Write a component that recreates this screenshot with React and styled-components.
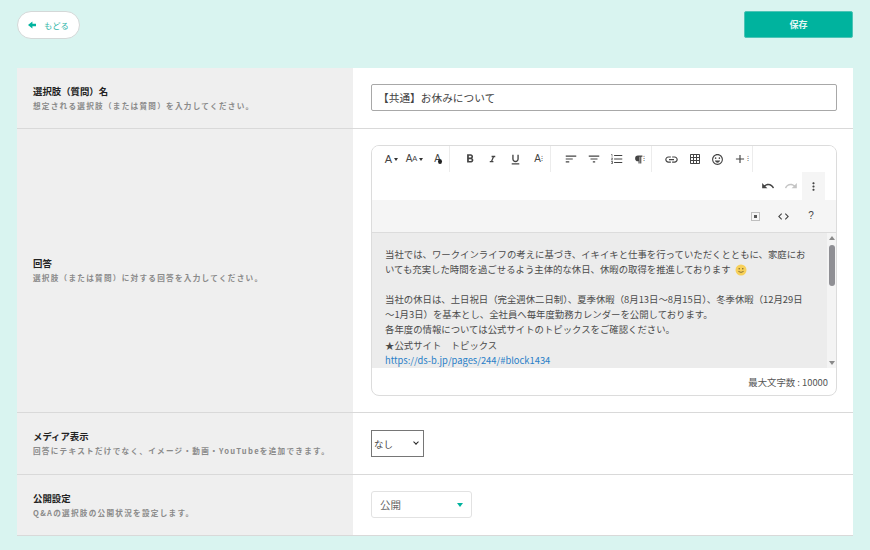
import styled, { createGlobalStyle } from "styled-components";
import {
  MdFormatBold,
  MdFormatItalic,
  MdFormatUnderlined,
  MdSort,
  MdFilterList,
  MdFormatListNumbered,
  MdLink,
  MdGridOn,
  MdOutlineEmojiEmotions,
  MdAdd,
  MdUndo,
  MdRedo,
  MdMoreVert,
  MdCode,
} from "react-icons/md";
import { FaParagraph } from "react-icons/fa";

const GlobalStyle = createGlobalStyle`
  html, body {
    margin: 0;
    padding: 0;
    background: #d9f4f0;
  }
  body {
    font-family: "Noto Sans CJK JP", "Noto Sans", sans-serif;
  }
`;

const Page = styled.div`
  height: 550px;
  box-sizing: border-box;
  padding: 11px 17px 14px;
  overflow: hidden;
`;

const TopBar = styled.div`
  display: flex;
  justify-content: space-between;
  margin-bottom: 29px;
`;

const BackButton = styled.button`
  width: 63px;
  height: 28px;
  box-sizing: border-box;
  display: flex;
  align-items: center;
  gap: 8px;
  padding: 0 0 0 10px;
  background: #fff;
  border: 1px solid #d4d8d8;
  border-radius: 14px;
  color: #2fb5a8;
  font: 400 8.3px "Noto Sans CJK JP", sans-serif;
`;

const BackArrow = styled.svg`
  width: 8px;
  height: 8px;
  fill: #00b39e;
`;

const SaveButton = styled.button`
  width: 109px;
  height: 27px;
  background: #00b39e;
  border: 1px solid #4cc4b6;
  border-radius: 2px;
  color: #e4f7f4;
  font: 700 9px "Noto Sans CJK JP", sans-serif;
`;

const Form = styled.div`
  background: #fff;
`;

const Row = styled.div`
  display: grid;
  grid-template-columns: 336px 1fr;
  border-bottom: 1px solid #d9d9d9;
`;

const LabelCell = styled.div`
  background: #efefef;
  padding: 0 16px 2px;
  display: flex;
  flex-direction: column;
  justify-content: center;
  gap: 2px;
`;

const Title = styled.div`
  font-size: 9.4px;
  line-height: 14px;
  font-weight: 700;
  color: #222;
`;

const Hint = styled.div`
  font-size: 7.6px;
  line-height: 11px;
  font-weight: 700;
  letter-spacing: 1.28px;
  color: #8a8a8a;
`;

const FieldCell = styled.div`
  padding: ${(p) => p.$pad || "16px 16px 16px 18px"};
`;

const TextInput = styled.input`
  display: block;
  width: 100%;
  height: 27px;
  box-sizing: border-box;
  padding: 0 6px;
  border: 1px solid #a8a8a8;
  border-radius: 2px;
  color: #444;
  font: 400 10.7px "Noto Sans CJK JP", sans-serif;
`;

const Editor = styled.div`
  border: 1px solid #dcdcdc;
  border-radius: 8px;
  overflow: hidden;
  background: #fff;
`;

const ToolRow = styled.div`
  display: flex;
  height: ${(p) => p.$h}px;
  justify-content: ${(p) => (p.$end ? "flex-end" : "flex-start")};
  padding-right: ${(p) => (p.$end ? 11 : 0)}px;
  background: ${(p) => (p.$gray ? "#f5f5f5" : "#fff")};
  border-bottom: ${(p) => (p.$gray ? "1px solid #dcdcdc" : "0")};
`;

const ToolGroup = styled.div`
  display: flex;
  padding-left: 8px;
  border-right: 1px solid #ececec;
`;

const Tool = styled.div`
  width: ${(p) => p.$w || 23}px;
  display: flex;
  align-items: center;
  justify-content: center;
  position: relative;
  color: ${(p) => (p.$off ? "#c4c4c4" : "#444")};
  background: ${(p) => (p.$active ? "#f5f5f5" : "transparent")};
  font-size: 13px;
  line-height: 1;
`;

const ToolGlyph = styled.span`
  font-size: ${(p) => p.$size || 11}px;
  font-family: "Liberation Sans", sans-serif;
  font-weight: ${(p) => p.$weight || 400};
  color: #444;
`;

const SmallGlyph = styled.span`
  font-size: 7.5px;
  font-family: "Liberation Sans", sans-serif;
  color: #444;
`;

const Caret = styled.span`
  margin-left: 2px;
  border-left: 2.5px solid transparent;
  border-right: 2.5px solid transparent;
  border-top: 3px solid #333;
`;

const FillDot = styled.span`
  position: absolute;
  left: 12px;
  top: 13px;
  width: 4px;
  height: 5px;
  border-radius: 50%;
  background: #222;
`;

const BodyArea = styled.div`
  display: flex;
  height: 135px;
  background: #ececec;
`;

const BodyText = styled.div`
  flex: 1;
  padding: 14px 0 0 13px;
  font-size: 9.4px;
  line-height: 15.1px;
  color: #4a4a4a;
  white-space: nowrap;
  overflow: hidden;
`;

const Link = styled.a`
  color: #2a80c8;
  text-decoration: none;
  font-size: 9.4px;
`;

const Smile = styled.svg`
  width: 12px;
  height: 12px;
  vertical-align: -3px;
  margin-left: 4px;
`;

const ScrollTrack = styled.div`
  width: 9px;
  background: #f4f4f4;
  display: flex;
  flex-direction: column;
  align-items: center;
  justify-content: space-between;
  padding: 3px 0;
  box-sizing: border-box;
  position: relative;
`;

const ScrollArrow = styled.span`
  border-left: 3px solid transparent;
  border-right: 3px solid transparent;
  ${(p) => (p.$down ? "border-top: 4px solid #8a8a8a;" : "border-bottom: 4px solid #8a8a8a;")}
`;

const ScrollThumb = styled.div`
  position: absolute;
  top: 12px;
  left: 1.5px;
  width: 6px;
  height: 41px;
  border-radius: 3px;
  background: #8f8f94;
`;

const EditorFooter = styled.div`
  height: 27px;
  display: flex;
  align-items: center;
  justify-content: flex-end;
  padding-right: 8px;
  font-size: 9.4px;
  color: #555;
`;

const SelectWrap = styled.div`
  position: relative;
  width: 53px;
  &::after {
    content: "";
    position: absolute;
    left: 43px;
    top: 9.5px;
    width: 3px;
    height: 3px;
    border-right: 1.6px solid #222;
    border-bottom: 1.6px solid #222;
    transform: rotate(45deg);
    pointer-events: none;
  }
`;

const NativeSelect = styled.select`
  display: block;
  width: 53px;
  height: 27px;
  padding: 0 0 0 2px;
  appearance: none;
  background: #fff;
  border: 1px solid #767676;
  border-radius: 0;
  color: #444;
  font: 400 9.5px "Noto Sans CJK JP", sans-serif;
`;

const SelectBox = styled.div`
  width: 101px;
  height: 27px;
  box-sizing: border-box;
  display: flex;
  align-items: center;
  justify-content: space-between;
  padding: 0 8px;
  border: 1px solid #e2e2e2;
  border-radius: 3px;
  color: #666;
  font-size: 10.5px;
  &::after {
    content: "";
    border-left: 3px solid transparent;
    border-right: 3px solid transparent;
    border-top: 4px solid #00b39e;
  }
`;

const App = () => {
  return (
    <Page>
      <GlobalStyle />
      <TopBar>
        <BackButton>
          <BackArrow viewBox="0 0 8 8">
            <path d="M4.4 0.4 L0 4 L4.4 7.6 L4.4 5.3 L8 5.3 L8 2.7 L4.4 2.7 Z" />
          </BackArrow>
          もどる
        </BackButton>
        <SaveButton>保存</SaveButton>
      </TopBar>
      <Form>
        <Row>
          <LabelCell>
            <Title>選択肢（質問）名</Title>
            <Hint>想定される選択肢（または質問）を入力してください。</Hint>
          </LabelCell>
          <FieldCell $pad="16px 16px 17px 18px">
            <TextInput defaultValue="【共通】お休みについて" />
          </FieldCell>
        </Row>
        <Row>
          <LabelCell>
            <Title>回答</Title>
            <Hint>選択肢（または質問）に対する回答を入力してください。</Hint>
          </LabelCell>
          <FieldCell>
            <Editor>
              <ToolRow $h={26}>
                <ToolGroup>
                  <Tool><ToolGlyph $size={11}>A</ToolGlyph><Caret /></Tool>
                  <Tool><ToolGlyph $size={10}>A</ToolGlyph><SmallGlyph>A</SmallGlyph><Caret /></Tool>
                  <Tool><ToolGlyph $size={10}>A</ToolGlyph><FillDot /></Tool>
                </ToolGroup>
                <ToolGroup>
                  <Tool><MdFormatBold size={14} /></Tool>
                  <Tool><MdFormatItalic size={11} /></Tool>
                  <Tool><MdFormatUnderlined size={13} /></Tool>
                  <Tool><ToolGlyph $size={10}>A</ToolGlyph><SmallGlyph>⁝</SmallGlyph></Tool>
                </ToolGroup>
                <ToolGroup>
                  <Tool><MdSort size={14} /></Tool>
                  <Tool><MdFilterList size={14} /></Tool>
                  <Tool><MdFormatListNumbered size={14} /></Tool>
                  <Tool><FaParagraph size={9} /><SmallGlyph>⁝</SmallGlyph></Tool>
                </ToolGroup>
                <ToolGroup>
                  <Tool><MdLink size={15} /></Tool>
                  <Tool><MdGridOn size={12} /></Tool>
                  <Tool><MdOutlineEmojiEmotions size={13} /></Tool>
                  <Tool><MdAdd size={14} /><SmallGlyph>⁝</SmallGlyph></Tool>
                </ToolGroup>
              </ToolRow>
              <ToolRow $h={28} $end>
                <Tool><MdUndo size={14} /></Tool>
                <Tool $off><MdRedo size={14} /></Tool>
                <Tool $active><MdMoreVert size={13} /></Tool>
              </ToolRow>
              <ToolRow $h={32} $end $gray>
                <Tool $w={28}>
                  <svg width="9" height="9" viewBox="0 0 9 9">
                    <rect x="0.5" y="0.5" width="8" height="8" fill="none" stroke="#888" strokeDasharray="1 1" />
                    <rect x="3" y="3" width="3" height="3" fill="#555" />
                  </svg>
                </Tool>
                <Tool $w={28}><MdCode size={13} /></Tool>
                <Tool $w={28}><ToolGlyph $size={10}>?</ToolGlyph></Tool>
              </ToolRow>
              <BodyArea>
                <BodyText>
                  当社では、ワークインライフの考えに基づき、イキイキと仕事を行っていただくとともに、家庭にお<br />
                  いても充実した時間を過ごせるよう主体的な休日、休暇の取得を推進しております
                  <Smile viewBox="0 0 12 12">
                    <circle cx="6" cy="6" r="5.5" fill="#f7d05a" />
                    <circle cx="4.2" cy="4.8" r="0.7" fill="#6b5a2a" />
                    <circle cx="7.8" cy="4.8" r="0.7" fill="#6b5a2a" />
                    <path d="M3.4 7.4 Q6 9.4 8.6 7.4" fill="none" stroke="#6b5a2a" strokeWidth="0.8" />
                  </Smile>
                  <br />
                  <br />
                  当社の休日は、土日祝日（完全週休二日制）、夏季休暇（8月13日～8月15日）、冬季休暇（12月29日<br />
                  ～1月3日）を基本とし、全社員へ毎年度勤務カレンダーを公開しております。<br />
                  各年度の情報については公式サイトのトピックスをご確認ください。<br />
                  ★公式サイト　トピックス<br />
                  <Link href="#">https://ds-b.jp/pages/244/#block1434</Link>
                </BodyText>
                <ScrollTrack>
                  <ScrollArrow />
                  <ScrollThumb />
                  <ScrollArrow $down />
                </ScrollTrack>
              </BodyArea>
              <EditorFooter>最大文字数 : 10000</EditorFooter>
            </Editor>
          </FieldCell>
        </Row>
        <Row>
          <LabelCell>
            <Title>メディア表示</Title>
            <Hint>回答にテキストだけでなく、イメージ・動画・YouTubeを追加できます。</Hint>
          </LabelCell>
          <FieldCell $pad="17px 16px 17px 18px">
            <SelectWrap>
              <NativeSelect defaultValue="none">
                <option value="none">なし</option>
              </NativeSelect>
            </SelectWrap>
          </FieldCell>
        </Row>
        <Row>
          <LabelCell>
            <Title>公開設定</Title>
            <Hint>Q&Aの選択肢の公開状況を設定します。</Hint>
          </LabelCell>
          <FieldCell $pad="16px 16px 17px 18px">
            <SelectBox>公開</SelectBox>
          </FieldCell>
        </Row>
      </Form>
    </Page>
  );
};

export default App;
